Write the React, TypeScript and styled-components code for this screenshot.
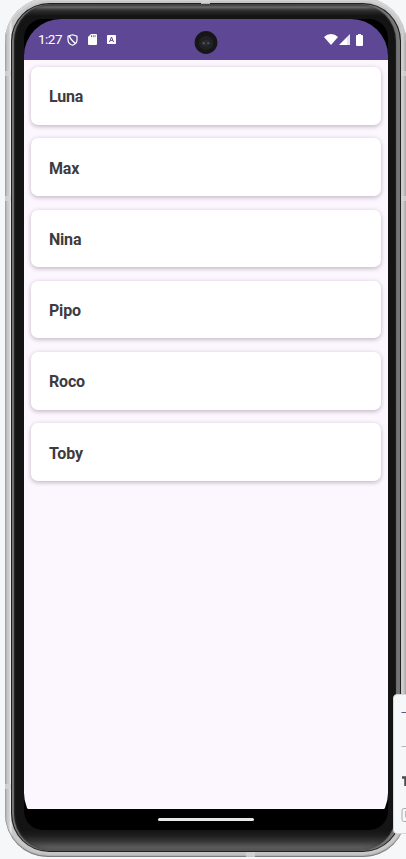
import React from "react";
import styled, { createGlobalStyle } from "styled-components";

const Global = createGlobalStyle`
  * { box-sizing: border-box; }
  html, body { margin: 0; padding: 0; overflow: hidden; background: #f5f7f9; }
  body { font-family: Roboto, "Liberation Sans", sans-serif; }
`;

const Stage = styled.main`
  position: relative;
  width: 406px;
  height: 859px;
  overflow: hidden;
  background: #f5f7f9;
  padding: 0 0 0 5px;
`;

const Frame = styled.div`
  position: relative;
  width: 401px;
  height: 859px;
  margin-top: -2px;
  padding: 5px 5px 5px 6px;
  border-radius: 43px;
  background: linear-gradient(90deg, #999 0, #c4c4c4 2px, #cdcdcd 4px, #f0f0f0 6px, #c8c8c8 7px, #c4c4c4 50%, #c9c9c9 396px, #d0d0d0 398px, #a5a5a5 401px);
  box-shadow: inset 0 -1px 1px #777, inset 0 -3px 2px -1px #b5b5b5, inset 0 3px 1px #d5d5d5;
`;

const Rim = styled.div`
  height: 100%;
  padding: 1px;
  border-radius: 38px;
  background: #222;
`;

const Bezel = styled.div`
  height: 100%;
  padding: 15px 12px 21px 12px;
  border-radius: 37px;
  background:
    linear-gradient(180deg, #353535 0, #777 3px, #454545 5px, #2b2b2b 7px, rgba(20, 20, 20, 0) 12px),
    linear-gradient(0deg, #777 0, #555 5px, #343434 10px, #1c1c1c 16px, rgba(20, 20, 20, 0) 21px),
    #141414;
  box-shadow: inset 2px 0 1px #777, inset -4px 0 1px #757575, inset 0 0 4px 1px #333;
`;

const Display = styled.div`
  display: flex;
  flex-direction: column;
  width: 364px;
  height: 811px;
  overflow: hidden;
  border-radius: 19px;
  background: #000;
`;

const Viewport = styled.div`
  display: flex;
  flex-direction: column;
  height: 811px;
  overflow: hidden;
  border-radius: 37px;
  background: #000;
`;

const StatusBar = styled.header`
  display: flex;
  flex: 0 0 41px;
  align-items: center;
  padding: 0 25px 0 14px;
  background: #5e4896;
  color: #fff;
`;

const Clock = styled.time`
  width: 29px;
  font-size: 13.5px;
  line-height: 15px;
  letter-spacing: -0.5px;
`;

const StatusIcon = styled.svg<{ $gap?: number }>`
  display: block;
  flex: none;
  margin-left: ${({ $gap = 0 }) => $gap}px;
`;

const Spacer = styled.span`
  flex: 1;
`;

const Camera = styled.svg`
  position: absolute;
  left: 189px;
  top: 31px;
`;

const List = styled.ul`
  display: flex;
  flex: 1;
  flex-direction: column;
  gap: 13.8px;
  margin: 0;
  padding: 7px;
  list-style: none;
  background: #fcf6fe;
`;

const Card = styled.li`
  display: flex;
  flex: 0 0 57.5px;
  align-items: center;
  padding: 2px 18px 0;
  border-radius: 7px;
  background: #fff;
  color: #3d3b41;
  font-size: 16px;
  font-weight: 700;
  letter-spacing: -0.2px;
  box-shadow: 0 2px 4px rgba(40, 20, 50, 0.2), 0 0 5px rgba(70, 20, 80, 0.1);
`;

const NavBar = styled.footer`
  display: flex;
  flex: 0 0 21px;
  justify-content: center;
  align-items: center;
  background: #000;
`;

const Handle = styled.span`
  width: 96px;
  height: 3px;
  border-radius: 2px;
  background: #e8e8e8;
`;

const Seam = styled.i<{ $x: number; $y: number; $wide?: boolean }>`
  position: absolute;
  left: ${({ $x }) => $x}px;
  top: ${({ $y }) => $y}px;
  width: ${({ $wide }) => ($wide ? 9 : 6)}px;
  height: 5px;
  background: rgba(212, 212, 212, 0.8);
`;

const Panel = styled.aside`
  position: absolute;
  left: 393px;
  top: 694px;
  width: 24px;
  height: 140px;
  border: 1px solid #d5d7da;
  border-radius: 4px;
  background: #f6f7f9;
  overflow: hidden;
`;

const names = ["Luna", "Max", "Nina", "Pipo", "Roco", "Toby"];

export default function App() {
  return (
    <>
      <Global />
      <Stage>
        <Frame>
          <Rim>
            <Bezel>
              <Display>
                <Viewport>
                  <StatusBar>
                    <Clock>1:27</Clock>
                    <StatusIcon width="11" height="12" viewBox="0 0 11 12" fill="none" stroke="#fff" strokeWidth="1.2">
                      <path d="M5.5 .8 10 2.3v3.4c0 2.6-1.8 4.6-4.5 5.6C2.800 10.300 1 8.300 1 5.700V2.300Z" />
                      <path d="M2.500 1.800C2.800 5 5.500 7 8.500 9.500" strokeWidth="1.500" />
                    </StatusIcon>
                    <StatusIcon $gap={10} width="9" height="11" viewBox="0 0 9 11">
                      <path fill="#fff" d="M3 0h5q1 0 1 1v9q0 1-1 1H1q-1 0-1-1V3Z" />
                      <path stroke="#5e4896" strokeWidth=".8" d="M3.500 1.200v2M5.300 1.200v2M7.100 1.200v2" />
                    </StatusIcon>
                    <StatusIcon $gap={10} width="9" height="9" viewBox="0 0 9 9">
                      <rect width="9" height="9" rx=".7" fill="#fff" />
                      <path d="m2.500 7 2-5 2 5M3.200 5.400h2.600" fill="none" stroke="#5e4896" strokeWidth="1" />
                    </StatusIcon>
                    <Spacer />
                    <StatusIcon width="14" height="11" viewBox="0 0 14 11">
                      <path fill="#fff" d="M0 3Q3 0 7 0t7 3L7 11Z" />
                    </StatusIcon>
                    <StatusIcon $gap={1} width="11" height="11" viewBox="0 0 11 11">
                      <path fill="#fff" d="M11 0v11H0Z" />
                      <path fill="#5e4896" opacity=".14" d="M11 0v11H8V3Z" />
                    </StatusIcon>
                    <StatusIcon $gap={6} width="7" height="12" viewBox="0 0 7 12">
                      <path fill="#fff" d="M2 0h3v1h1q1 0 1 1v9q0 1-1 1H1q-1 0-1-1V2q0-1 1-1h1Z" />
                    </StatusIcon>
                  </StatusBar>
                  <List>
                    {names.map((name) => (
                      <Card key={name}>{name}</Card>
                    ))}
                  </List>
                  <NavBar>
                    <Handle />
                  </NavBar>
                </Viewport>
              </Display>
            </Bezel>
          </Rim>
        </Frame>
        <Camera width="34" height="24" viewBox="0 0 34 24">
          <circle cx="17" cy="11.500" r="11.400" fill="#171518" />
          <circle cx="17" cy="12" r="7.200" fill="#212023" />
          <ellipse cx="17" cy="12" rx="5" ry="3" fill="#2a2a2c" />
          <circle cx="14.700" cy="12.200" r="1" fill="#426f7a" />
          <circle cx="19.200" cy="12.200" r="1" fill="#3a5d86" />
        </Camera>
        <Seam $x={201} $y={-1} $wide />
        <Seam $x={5} $y={71} />
        <Seam $x={5} $y={196} />
        <Seam $x={401} $y={71} />
        <Seam $x={401} $y={196} />
        <Seam $x={5} $y={784} />
        <Seam $x={246} $y={852} $wide />
        <Panel>
          <svg width="22" height="138" viewBox="0 0 22 138" fill="none">
            <path d="M7.500 17.500H22" stroke="#5d5a77" strokeWidth="1.200" />
            <path d="M7.500 51.500H22" stroke="#b5b5ba" />
            <path d="M8 82.500h3.500V91" stroke="#4b4b4b" strokeWidth="2.500" />
            <rect x="8" y="113.500" width="20" height="13" rx="2" stroke="#aaa" />
            <path d="M11.500 116v6h5" stroke="#bbb" />
          </svg>
        </Panel>
      </Stage>
    </>
  );
}
